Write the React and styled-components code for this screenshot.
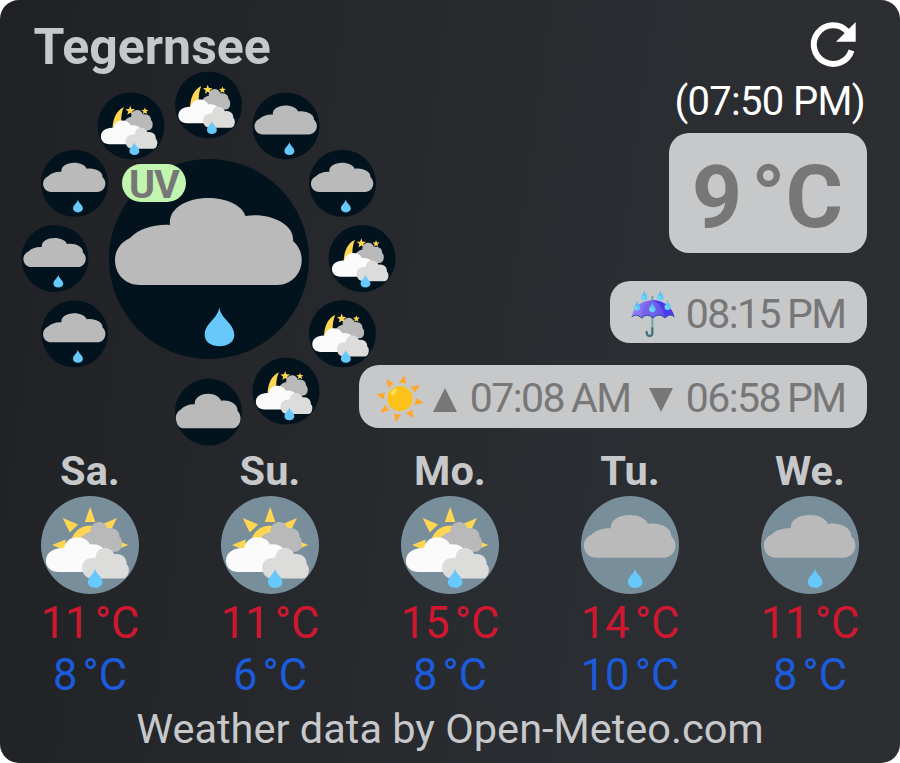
import React from "react";
import styled, { createGlobalStyle } from "styled-components";

const GlobalStyle = createGlobalStyle`
  * { box-sizing: border-box; }
  body {
    margin: 0;
    background: #fff;
    font-family: Roboto, "Liberation Sans", sans-serif;
  }
`;

const Widget = styled.main`
  display: flex;
  flex-direction: column;
  width: 900px;
  height: 763px;
  overflow: hidden;
  border-radius: 19px;
  color: #c7c8ca;
  background: linear-gradient(98deg, #202125 0%, #25272b 30%, #2a2d31 65%, #2d2e32 100%);
`;

const Current = styled.section`
  display: grid;
  grid-template-columns: 340px 1fr;
  height: 445.5px;
`;

const Place = styled.div`
  display: flex;
  flex-direction: column;
  padding-top: 20px;
`;

const Label = styled.div`
  font-size: ${(p) => p.$size}px;
  line-height: ${(p) => p.$line}px;
  font-weight: ${(p) => (p.$bold ? 700 : 400)};
  letter-spacing: ${(p) => p.$track || 0}px;
  word-spacing: ${(p) => p.$word || 0}px;
  color: ${(p) => p.$color || "inherit"};
  white-space: pre;
`;

const Unit = styled.span`
  margin-left: ${(p) => p.$gap || 0.12}em;
`;

const Title = styled.h1`
  margin: 0 0 0 33.5px;
  font-size: 50px;
  line-height: 55px;
  font-weight: 700;
`;

/* Clock-face canvas: the hourly discs sit around the current-weather disc. */
const Dial = styled.div`
  position: relative;
  width: 376px;
  height: 376px;
  margin: -4px 0 0 21px;
`;

const Disc = styled.svg`
  display: block;
  width: ${(p) => p.$size}px;
  height: ${(p) => p.$size}px;
  border-radius: 50%;
  background: ${(p) => (p.$day ? "#788f9b" : "#03131d")};
`;

const Hour = styled.div`
  position: absolute;
  left: 187.6px;
  top: 187.7px;
  margin: -33.4px;
  transform: rotate(${(p) => p.$angle}deg) translateY(-153.6px) rotate(-${(p) => p.$angle}deg);
`;

const Now = styled.div`
  position: absolute;
  left: 87.8px;
  top: 87.8px;
`;

const UvBadge = styled.div`
  position: absolute;
  left: 101px;
  top: 93px;
  width: 64px;
  height: 38px;
  border-radius: 19px;
  background: #c2f5b0;
  color: #777;
  font-size: 39.5px;
  font-weight: 700;
  letter-spacing: -1px;
  line-height: 42px;
  text-align: center;
`;

const Readings = styled.div`
  display: flex;
  flex-direction: column;
  align-items: flex-end;
  padding: 21px 33px 0 0;
`;

const Refresh = styled.svg`
  width: 47px;
  height: 47px;
  margin-right: 10px;
`;

const Updated = styled(Label)`
  margin: 11px 2px 8px 0;
`;

const Card = styled.div`
  display: flex;
  align-items: center;
  justify-content: flex-end;
  height: ${(p) => p.$height}px;
  width: ${(p) => p.$width}px;
  margin-bottom: ${(p) => p.$after}px;
  padding: ${(p) => p.$pad};
  border-radius: 20px;
  background: #c7c8ca;
  color: #777;
`;

const Glyph = styled.svg`
  flex: none;
  width: ${(p) => p.$w}px;
  height: ${(p) => p.$h}px;
  margin-right: ${(p) => p.$gap}px;
`;

const Daylight = styled.div`
  display: flex;
  align-items: center;
  gap: 18.5px;
`;

const SunTime = styled.div`
  display: flex;
  align-items: center;
`;

const Forecast = styled.section`
  display: grid;
  grid-template-columns: repeat(5, 1fr);
`;

const Day = styled.article`
  display: flex;
  flex-direction: column;
  align-items: center;
`;

const DayName = styled(Label)`
  margin-bottom: 0.5px;
`;

const Credit = styled.footer`
  margin-top: 5px;
  font-size: 41.5px;
  line-height: 52px;
  text-align: center;
  white-space: pre;
`;

const FLAT_CLOUD =
  "M31 126C16 126 6 115 6 101C6 91 12 83 21 79C30 70 45 65 61 66C59 50 77 39 99 39C117 39 133 46 136.500 57C160 53 186 65 184 82C190 87 192.700 94 192.700 101C192.700 115 182 126 168 126Z";

function Drop() {
  return (
    <path
      fill="#66c8fb"
      d="M110.300 148C111.500 160 125.300 164 125.300 176C125.300 183 118.500 187.300 110.500 187.300C102.500 187.300 95.700 183 95.700 176C95.700 164 109 160 110.300 148Z"
    />
  );
}

function Star({ x, y, r }) {
  const points = Array.from({ length: 10 }, (_, i) => {
    const a = (i * Math.PI) / 5;
    const d = i % 2 ? r * 0.42 : r;
    return `${x + d * Math.sin(a)},${y - d * Math.cos(a)}`;
  }).join(" ");
  return <polygon points={points} fill="#ffd552" />;
}

function MixedSky({ day }) {
  return (
    <>
      {day ? (
        <g fill="#ffd552">
          <circle cx="100" cy="100" r="39.500" />
          <path d="M100.300 22L111 53H89.400ZM44.400 45L75.800 58L58.700 74.400ZM155 45L141 74L124 58ZM22.500 100L50 89V111ZM178 100L150 89V111Z" />
        </g>
      ) : (
        <>
          <path d="M79 44C57 54 45 80 45 112H76C69 95 69 66 79 44Z" fill="#ffd552" />
          <Star x={98} y={55} r={15} />
          <Star x={142} y={56} r={11} />
        </>
      )}
      <path
        fill="#b9b9b9"
        d="M79 92C82 81 92 74 101 74C100 62 108 53 119 53C127 53 133 58 136 66C150 63 162 73 160 83C164 87 166 92 165 98C165 110 156 115 148 114H90Z"
      />
      <path
        fill="#fbfbfb"
        d="M36 155C20 155 10 145 10 132C10 117 24 105 47 106C50 92 60 84 74 84C87 84 96 90 100 99C112 97 122 101 128 108V155Z"
      />
      <path
        fill="#dcdcdb"
        d="M104 168.600C91 168 84 158 84 146C84 133 94 125 111 126C112 114 119 106 130 106C139 106 147 111 149.500 119C164 116 176 126 174.500 139C180 144 181 153 177 161C175 165 172 168 167 168.600Z"
      />
      <Drop />
    </>
  );
}

const skies = {
  mixed: () => <MixedSky />,
  mixedDay: () => <MixedSky day />,
  rain: () => (
    <>
      <path d={FLAT_CLOUD} fill="#bababa" />
      <Drop />
    </>
  ),
  overcast: () => (
    <path d={FLAT_CLOUD} fill="#bababa" transform="matrix(1.04 0 0 1.195 -4.2 -1.6)" />
  ),
};

function Sky({ kind, size, day }) {
  return (
    <Disc $size={size} $day={day} viewBox="0 0 200 200">
      {skies[kind + (day && kind === "mixed" ? "Day" : "")]()}
    </Disc>
  );
}

const drops = [[40, 3], [88, 3], [18, 34], [64, 39], [110, 32]];

function Umbrella() {
  return (
    <Glyph $w={45} $h={50} $gap={9.5} viewBox="0 0 135 150">
      <defs>
        <linearGradient id="canopy">
          <stop offset="0" stopColor="#9a7ff8" />
          <stop offset="0.5" stopColor="#7560ed" />
          <stop offset="1" stopColor="#4a3bf2" />
        </linearGradient>
        <linearGradient id="drop" x2="0" y2="1">
          <stop offset="0" stopColor="#50bce8" />
          <stop offset="1" stopColor="#62d0fc" />
        </linearGradient>
      </defs>
      <path d="M64 23V118" stroke="#68a9ae" strokeWidth="6" strokeLinecap="round" />
      <path d="M64 118V133Q64 141 56 141Q47 141 47 129" fill="none" stroke="#40777e" strokeWidth="7" strokeLinecap="round" />
      <path d="M2 84C6 56 31 34 65 34C98 34 125 56 130 84Q118 70 102 87Q84 69 66 87Q49 70 32 87Q15 71 2 84Z" fill="url(#canopy)" />
      <path d="M64 34C86 42 98 60 102 86C112 76 121 76 130 84C125 56 98 34 64 34Z" fill="#493bec" />
      <path d="M64 34C44 42 34 62 32 86Q49 70 66 87Z" fill="#7662e9" />
      <path d="M2 84Q15 71 32 87Q49 70 66 87Q84 69 102 87Q118 70 130 84" fill="none" stroke="#29509f" strokeWidth="3" />
      {drops.map(([x, y]) => (
        <g key={x} transform={`translate(${x} ${y})`}>
          <path d="M0 0Q1 9 7 15C13 23 8 31 0 31S-13 23-7 15Q-1 9 0 0Z" fill="url(#drop)" />
          <path d="M-4 18Q-5 24-2 26" stroke="#a3e8ff" strokeWidth="3" fill="none" />
        </g>
      ))}
    </Glyph>
  );
}

function Sun() {
  return (
    <Glyph $w={48} $h={48} $gap={8.5} viewBox="0 0 144 144">
      {Array.from({ length: 8 }, (_, i) => (
        <path key={i} d="M72 2L83 28Q72 24 61 28Z" fill="#ffa726" transform={`rotate(${10 + i * 45} 72 74)`} />
      ))}
      <circle cx="72" cy="74" r="38" fill="#fcc21b" />
      <ellipse cx="54" cy="53" rx="6" ry="11" fill="#fde35c" transform="rotate(36 54 53)" />
    </Glyph>
  );
}

function Triangle({ down }) {
  return (
    <Glyph $w={24} $h={27} $gap={13} viewBox="0 0 24 27">
      <path d={down ? "M0 3H24L12 27Z" : "M12 3L24 27H0Z"} fill="#777" />
    </Glyph>
  );
}

const hours = [
  [0, "mixed"], [30.3, "rain"], [60.7, "rain"], [90, "mixed"], [119.3, "mixed"], [149.7, "mixed"],
  [180, "overcast"], [240.7, "rain"], [270, "rain"], [299.3, "rain"], [329.7, "mixed"],
];

const days = [
  ["Sa.", "mixed", "11", "8"],
  ["Su.", "mixed", "11", "6"],
  ["Mo.", "mixed", "15", "8"],
  ["Tu.", "rain", "14", "10"],
  ["We.", "rain", "11", "8"],
];

export default function App() {
  return (
    <>
      <GlobalStyle />
      <Widget>
        <Current>
          <Place>
            <Title>Tegernsee</Title>
            <Dial>
              {hours.map(([angle, kind]) => (
                <Hour key={angle} $angle={angle}>
                  <Sky kind={kind} size={66.8} />
                </Hour>
              ))}
              <Now>
                <Sky kind="rain" size={200} />
              </Now>
              <UvBadge>UV</UvBadge>
            </Dial>
          </Place>
          <Readings>
            <Refresh viewBox="0 0 47 47">
              <path d="M41.500 29.500A19.300 19.300 0 1 1 37.300 10.500" fill="none" stroke="#fff" strokeWidth="6" />
              <path d="M45.700 1V20.700H26Z" fill="#fff" />
            </Refresh>
            <Updated $size={40} $line={46} $track={-0.67} $color="#fff">(07:50 PM)</Updated>
            <Card $width={198} $height={120} $after={28} $pad="8px 24px 0 0">
              <Label $size={88} $line={100} $bold>9<Unit $gap={0.1}>°C</Unit></Label>
            </Card>
            <Card $width={257} $height={62} $after={22} $pad="3px 21.5px 0 0">
              <Umbrella />
              <Label $size={41} $line={48} $track={-1.6} $word={-1.5}>08:15 PM</Label>
            </Card>
            <Card $width={508} $height={63} $after={0} $pad="3px 21.5px 0 0">
              <Sun />
              <Daylight>
                <SunTime>
                  <Triangle />
                  <Label $size={41} $line={48} $track={-1.6} $word={-1.5}>07:08 AM</Label>
                </SunTime>
                <SunTime>
                  <Triangle down />
                  <Label $size={41} $line={48} $track={-1.6} $word={-1.5}>06:58 PM</Label>
                </SunTime>
              </Daylight>
            </Card>
          </Readings>
        </Current>
        <Forecast>
          {days.map(([name, kind, high, low]) => (
            <Day key={name}>
              <DayName $size={41.5} $line={50} $bold>{name}</DayName>
              <Sky kind={kind} size={98} day />
              <Label $size={43.5} $line={59} $color="#cf1830">{high}<Unit>°C</Unit></Label>
              <Label $size={43.5} $line={45} $color="#1b5bdc">{low}<Unit>°C</Unit></Label>
            </Day>
          ))}
        </Forecast>
        <Credit>Weather data by Open-Meteo.com</Credit>
      </Widget>
    </>
  );
}
